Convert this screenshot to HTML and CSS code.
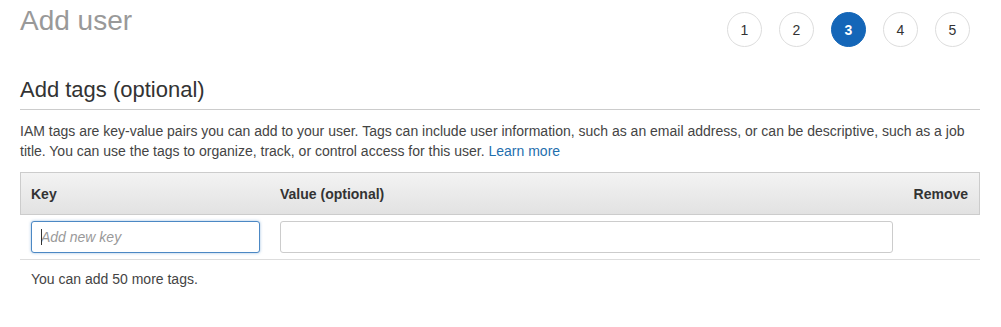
FILE: index.html
```html
<!DOCTYPE html>
<html lang="en">
<head>
  <meta charset="utf-8">
  <title>Add user</title>
  <link rel="stylesheet" href="styles.css">
</head>
<body>
  <div class="page">
    <div class="top">
      <h1 class="title">Add user</h1>
      <ol class="steps">
        <li class="step">1</li>
        <li class="step">2</li>
        <li class="step active">3</li>
        <li class="step">4</li>
        <li class="step">5</li>
      </ol>
    </div>

    <h2 class="section">Add tags (optional)</h2>
    <p class="intro">IAM tags are key-value pairs you can add to your user. Tags can include user information, such as an email address, or can be descriptive, such as a job title. You can use the tags to organize, track, or control access for this user. <a href="#">Learn more</a></p>

    <div class="tags">
      <div class="tags-head">
        <div class="cell">Key</div>
        <div class="cell">Value (optional)</div>
        <div class="cell remove">Remove</div>
      </div>
      <div class="tags-row">
        <div class="cell">
          <span class="field">
            <input class="input focus" type="text" placeholder="Add new key">
            <span class="caret"></span>
          </span>
        </div>
        <div class="cell"><input class="input" type="text"></div>
        <div class="cell"></div>
      </div>
    </div>

    <p class="note">You can add 50 more tags.</p>
  </div>
</body>
</html>
```

FILE: styles.css
```css
html, body {
  margin: 0;
  padding: 0;
  background: #ffffff;
  font-family: "Liberation Sans", Arial, sans-serif;
  color: #444444;
}

.page {
  padding: 0 21px 0 20px;
}

.top {
  display: flex;
  justify-content: space-between;
  align-items: flex-start;
}

.title {
  margin: 0;
  padding-top: 5px;
  font-size: 28px;
  line-height: 32px;
  font-weight: normal;
  color: #999999;
}

.steps {
  display: flex;
  gap: 17px;
  list-style: none;
  margin: 12px 10px 0 0;
  padding: 0;
}

.step {
  width: 33px;
  height: 33px;
  border: 1px solid #dddddd;
  border-radius: 50%;
  display: flex;
  align-items: center;
  justify-content: center;
  font-size: 14px;
  color: #333333;
}

.step.active {
  background: #1466b8;
  border-color: #1466b8;
  color: #ffffff;
  font-weight: bold;
}

.section {
  margin: 30px 0 0 0;
  padding-bottom: 6px;
  border-bottom: 1px solid #cccccc;
  font-size: 22px;
  line-height: 26px;
  font-weight: normal;
  color: #333333;
}

.intro {
  margin: 11px 0 0 0;
  font-size: 14px;
  line-height: 20px;
}

.intro a {
  color: #1f6fae;
  text-decoration: none;
}

.tags {
  margin-top: 11px;
}

.tags-head, .tags-row {
  display: grid;
  grid-template-columns: 249px 1fr 76px;
  align-items: center;
}

.tags-head {
  height: 41px;
  border: 1px solid #cccccc;
  background: linear-gradient(#f3f3f3, #e2e2e2);
  font-size: 14px;
  font-weight: bold;
  color: #333333;
}

.tags-head .cell {
  padding-left: 10px;
}

.tags-head .remove {
  padding-left: 0;
  padding-right: 11px;
  text-align: right;
}

.tags-row {
  padding: 6px 0;
  border-bottom: 1px solid #dddddd;
}

.tags-row .cell {
  padding: 0 11px;
}

.field {
  position: relative;
  display: block;
}

.input {
  box-sizing: border-box;
  display: block;
  width: 100%;
  height: 32px;
  padding: 0 9px;
  border: 1px solid #cccccc;
  border-radius: 3px;
  font-family: "Liberation Sans", Arial, sans-serif;
  font-size: 14px;
  color: #333333;
  outline: none;
}

.input::placeholder {
  color: #999999;
  font-style: italic;
}

.input.focus {
  width: 229px;
  border-color: #4c88c4;
  box-shadow: 0 0 3px rgba(76, 136, 196, 0.55);
}

.caret {
  position: absolute;
  left: 10px;
  top: 8px;
  width: 1px;
  height: 16px;
  background: #333333;
}

.note {
  margin: 9px 0 0 11px;
  font-size: 14px;
  line-height: 20px;
}
```
